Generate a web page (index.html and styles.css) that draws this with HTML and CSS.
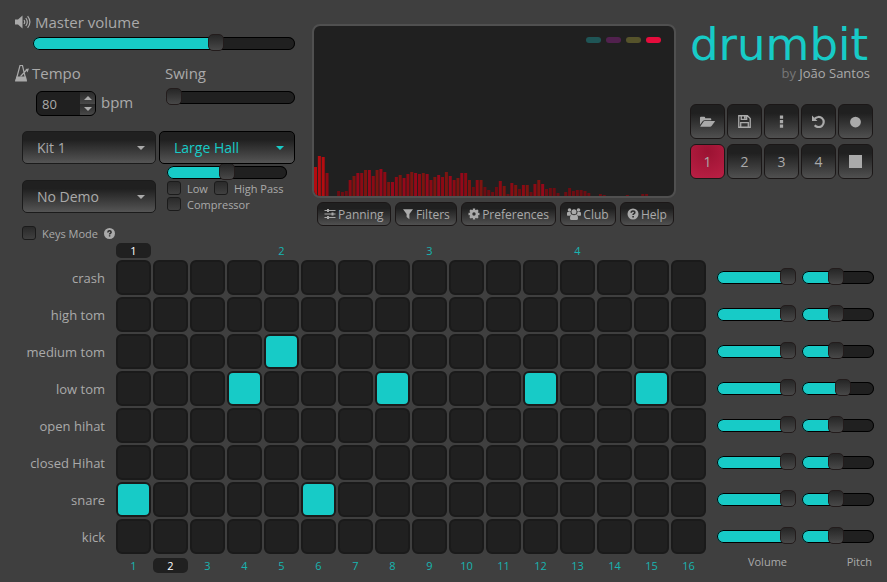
FILE: index.html
```
<!DOCTYPE html>
<html lang="en">
<head>
    <meta charset="UTF-8">
    <meta name="viewport" content="width=device-width, initial-scale=1.0">
    <title>drumbit</title>
    <link rel="stylesheet" href="styles.css">
</head>
<body>
    <header class="top">
        <section class="controls">
            <label class="title" for="master">
                <svg class="icon" viewBox="0 0 16 16"><path d="M0 5.500h3L7.500 1.500v13L3 10.500H0z"/><path class="line" d="M9 6q1.500 2 0 4M10.800 4q3 4 0 8M12.600 2.200q4.600 5.800 0 11.600"/></svg>
                Master volume
            </label>
            <input class="range master" id="master" type="range" value="71" style="--value: 71%">
            <div class="columns">
                <div class="column left">
                    <label class="title" for="tempo">
                        <svg class="icon metronome" viewBox="0 0 14 17"><path class="line" d="M5 1h2.500l3.500 15H1zM5.500 12L12 5"/><path d="M1.500 12h9.500l1 5H0zM10.500 4.500l3.500-.5-1.500 4z"/></svg>
                        Tempo
                    </label>
                    <div class="tempo">
                        <div class="spinner">
                            <input id="tempo" type="number" value="80">
                            <div class="arrows">
                                <button class="up" aria-label="Faster"></button>
                                <button class="down" aria-label="Slower"></button>
                            </div>
                        </div>
                        <span class="unit">bpm</span>
                    </div>
                    <div class="select kit">
                        <select aria-label="Kit"><option>Kit 1</option></select>
                    </div>
                    <div class="select demo">
                        <select aria-label="Demo"><option>No Demo</option></select>
                    </div>
                    <label class="check keys">
                        <input type="checkbox"> Keys Mode
                        <svg class="help" viewBox="0 0 12 12"><circle cx="6" cy="6" r="6"/><path class="cut" d="M4.200 4.800q0-1.800 1.800-1.800t1.800 1.500q0 .9-1 1.400-.7.400-.7 1.200M6.100 8v1.400"/></svg>
                    </label>
                </div>
                <div class="column right">
                    <label class="title" for="swing">Swing</label>
                    <input class="range swing" id="swing" type="range" value="0" style="--value: 0%">
                    <div class="select reverb">
                        <select aria-label="Reverb"><option>Large Hall</option></select>
                    </div>
                    <input class="range wet" type="range" value="50" style="--value: 50%" aria-label="Reverb amount">
                    <div class="checks">
                        <label class="check"><input type="checkbox"> Low</label>
                        <label class="check"><input type="checkbox"> High Pass</label>
                        <label class="check"><input type="checkbox"> Compressor</label>
                    </div>
                </div>
            </div>
        </section>

        <section class="center">
            <div class="scope">
                <div class="leds">
                    <span class="led teal"></span>
                    <span class="led purple"></span>
                    <span class="led olive"></span>
                    <span class="led red"></span>
                </div>
                <svg id="spectrum" viewBox="0 0 360 42" preserveAspectRatio="none"></svg>
            </div>
            <nav class="menu">
                <button class="button">
                    <svg viewBox="0 0 12 12"><path class="line" d="M.5 2.500h11M.5 6h11M.5 9.500h11"/><path d="M3 1h2v3H3zM7.500 4.500h2v3h-2zM3 8h2v3H3z"/></svg>
                    Panning
                </button>
                <button class="button">
                    <svg viewBox="0 0 12 12"><path d="M1 1.200h10L7.400 6v5.200L4.600 9V6z"/></svg>
                    Filters
                </button>
                <button class="button">
                    <svg viewBox="0 0 12 12"><circle class="gear" cx="6" cy="6" r="3"/><path class="teeth" d="M6 .5v2M6 9.500v2M.5 6h2M9.500 6h2M2.100 2.100l1.500 1.500M8.400 8.400l1.500 1.500M2.100 9.900l1.500-1.500M8.400 3.600l1.500-1.500"/></svg>
                    Preferences
                </button>
                <button class="button">
                    <svg class="wide" viewBox="0 0 14 12"><circle cx="2.500" cy="2" r="1.800"/><circle cx="11.500" cy="2" r="1.800"/><circle cx="7" cy="3.700" r="2.500"/><path d="M0 7.200V5q0-1 1-1h2.500q.2 2 1 2.500-1 .2-1.700 1.200H.5zM14 7.200V5q0-1-1-1h-2.500q-.2 2-1 2.500 1 .2 1.700 1.200h2.300zM3 10.500q0-3.800 2-4 2 1.300 4 0 2 .2 2 4 0 1.500-1.500 1.500h-5Q3 12 3 10.500z"/></svg>
                    Club
                </button>
                <button class="button">
                    <svg viewBox="0 0 12 12"><circle cx="6" cy="6" r="5.500"/><path class="cut" d="M4.200 4.800q0-1.800 1.800-1.800t1.800 1.500q0 .9-1 1.400-.7.400-.7 1.200M6.100 8v1.400"/></svg>
                    Help
                </button>
            </nav>
        </section>

        <section class="side">
            <h1>drumbit</h1>
            <p class="author">by <a href="#">João Santos</a></p>
            <div class="pads">
                <button class="button" aria-label="Open"><svg viewBox="0 0 16 12"><path d="M0 9V1.500Q0 .5 1 .5h3.500q1 0 1 1V2H11q1 0 1 1v1H5Q3.800 4 3 5z"/><path d="M5 5h10.500q.7 0 .2.700L12.500 10q-.7 1-1.700 1H.8q-.7 0-.2-.7L3.500 6Q4 5 5 5z"/></svg></button>
                <button class="button" aria-label="Save"><svg class="small" viewBox="0 0 12 12"><path class="line" d="M.7.700h8l2.600 2.600v8H.7zM3 .7v3.300h5V.7M2.500 11V7h7v4"/><path d="M5.500 1h1.700v2.500H5.500z"/></svg></button>
                <button class="button" aria-label="More"><svg class="small" viewBox="0 0 12 12"><path d="M4.500.500h3v3h-3zM4.500 4.600h3v3h-3zM4.500 8.700h3v3h-3z"/></svg></button>
                <button class="button" aria-label="Undo"><svg class="small" viewBox="0 0 12 12"><path class="arc" d="M2.500 3.500A4.700 4.700 0 1 1 2.500 9.500"/><path d="M0 .5v5h5z"/></svg></button>
                <button class="button" aria-label="Record"><svg class="small" viewBox="0 0 12 12"><circle cx="6" cy="6.500" r="5"/></svg></button>
                <button class="button active">1</button>
                <button class="button">2</button>
                <button class="button">3</button>
                <button class="button">4</button>
                <button class="button" aria-label="Stop"><svg class="small" viewBox="0 0 12 12"><path d="M0 0h12v12H0z"/></svg></button>
            </div>
        </section>
    </header>

    <main class="sequencer" id="sequencer"></main>

    <script src="script.js"></script>
</body>
</html>
```
FILE: styles.css
```
* {
    box-sizing: border-box;
}

body {
    margin: 0;
    background: #3f3f3f;
    color: #aaa;
    font-family: "Open Sans", "Noto Sans", sans-serif;
    font-size: 13px;
}

button,
input,
select {
    margin: 0;
    font-family: inherit;
    color: inherit;
}

svg {
    display: block;
    flex-shrink: 0;
    fill: #aaa;
}

svg .line,
svg .arc,
svg .cut,
svg .teeth {
    fill: none;
    stroke: #aaa;
    stroke-width: 1.2;
}

svg .arc {
    stroke-width: 2;
}

svg .cut {
    stroke: #2c2c2c;
    stroke-width: 1.6;
}

svg .gear {
    fill: none;
    stroke: #aaa;
    stroke-width: 2.6;
}

svg .teeth {
    stroke-width: 2.4;
}

.top {
    display: grid;
    grid-template-columns: 283px 1fr 183px;
    column-gap: 14px;
    padding: 0 14px 0 15px;
}

/* left controls */

.controls {
    padding: 13px 3px 0 0;
}

.title {
    display: flex;
    align-items: center;
    gap: 4px;
    height: 18px;
    font-size: 15px;
    line-height: 18px;
}

.icon {
    width: 16px;
    height: 16px;
}

.metronome {
    width: 14px;
    height: 18px;
}

.left .title {
    gap: 3px;
}

.range {
    -webkit-appearance: none;
    appearance: none;
    display: block;
    width: 100%;
    height: 17px;
    background: none;
}

.range::-webkit-slider-runnable-track {
    height: 13px;
    border-radius: 7px;
    background: linear-gradient(to right, #17cbc7 var(--value), #202020 var(--value));
    box-shadow: inset 0 0 0 1px #000;
}

.range::-webkit-slider-thumb {
    -webkit-appearance: none;
    appearance: none;
    width: 16px;
    height: 17px;
    margin-top: -3px;
    border: 1px solid #231c1c;
    border-radius: 5px;
    background: linear-gradient(#262626, #484848);
}

.master {
    width: calc(100% - 18px);
    margin: 4px 0 0 18px;
}

.columns {
    display: grid;
    grid-template-columns: 141px minmax(0, 1fr);
    column-gap: 3px;
    margin-top: 12px;
}

.column {
    display: flex;
    flex-direction: column;
}

.right .title {
    padding-left: 6px;
}

.tempo {
    display: flex;
    align-items: center;
    gap: 5px;
    height: 25px;
    margin: 9px 0 15px 21px;
    font-size: 15px;
}

.unit {
    padding-bottom: 3px;
}

.spinner {
    display: flex;
    width: 60px;
    height: 25px;
    border: 1px solid #000;
    border-radius: 6px;
    background: #202020;
    overflow: hidden;
}

.spinner input {
    flex: 1;
    min-width: 0;
    padding: 0 0 0 5px;
    border: 0;
    background: none;
    font-size: 13px;
    -moz-appearance: textfield;
    appearance: textfield;
}

.spinner input::-webkit-inner-spin-button {
    display: none;
}

.arrows {
    display: grid;
    grid-template-rows: 1fr 1fr;
    width: 15px;
}

.arrows button {
    display: grid;
    place-items: center;
    padding: 0;
    border: 0;
    background: linear-gradient(#2a2a2a, #484848);
}

.arrows button::after {
    content: "";
    border: 4px solid transparent;
    border-top-width: 0;
    border-bottom-color: #aaa;
}

.arrows .down::after {
    border-width: 4px 4px 0;
    border-top-color: #aaa;
}

.select {
    position: relative;
    height: 33px;
}

.select select {
    -webkit-appearance: none;
    appearance: none;
    width: 100%;
    height: 100%;
    padding: 0 14px;
    border: 1px solid #1b1b1b;
    border-radius: 5px;
    background: linear-gradient(#202020 25%, #555);
    font-size: 14px;
}

.select::after {
    content: "";
    position: absolute;
    top: 15px;
    right: 11px;
    border: 4px solid transparent;
    border-top-color: #aaa;
    border-bottom-width: 0;
    pointer-events: none;
}

.kit,
.demo {
    margin-left: 7px;
}

.demo {
    margin-top: 16px;
}

.reverb {
    margin-top: 25px;
    color: #17cbc7;
}

.reverb select {
    border-color: #000;
}

.reverb::after {
    border-top-color: #17cbc7;
}

.swing {
    width: auto;
    margin: 7px 0 0 7px;
}

.wet {
    width: auto;
    margin: 0 8px;
}

.checks {
    display: flex;
    flex-wrap: wrap;
    gap: 2px 6px;
    padding-left: 8px;
}

.check {
    display: flex;
    align-items: center;
    gap: 6px;
    height: 14px;
    font-size: 11px;
    white-space: nowrap;
}

.check input {
    -webkit-appearance: none;
    appearance: none;
    width: 14px;
    height: 14px;
    border: 1px solid #1b1b1b;
    border-radius: 3px;
    background: linear-gradient(#2a2a2a, #404040);
}

.keys {
    margin: 13px 0 0 7px;
}

.help {
    width: 11px;
    height: 11px;
}

/* spectrum and menu */

.center {
    padding-top: 24px;
}

.scope {
    display: flex;
    flex-direction: column;
    justify-content: space-between;
    height: 174px;
    border: 2px solid #505050;
    border-radius: 8px;
    background: #202020;
    overflow: hidden;
}

.leds {
    display: flex;
    justify-content: flex-end;
    gap: 5px;
    padding: 11px 13px;
}

.led {
    width: 15px;
    height: 6px;
    border-radius: 3px;
}

.teal {
    background: #1f5556;
}

.purple {
    background: #51214e;
}

.olive {
    background: #56532b;
}

.red {
    background: #e60c3c;
}

#spectrum {
    width: 100%;
    height: 42px;
}

.button {
    display: flex;
    align-items: center;
    justify-content: center;
    padding: 0;
    border: 1px solid #1b1717;
    border-radius: 6px;
    background: linear-gradient(#202020 25%, #505050);
}

.menu {
    display: flex;
    justify-content: space-between;
    margin-top: 4px;
    padding: 0 2px 0 5px;
}

.menu .button {
    gap: 2px;
    height: 24px;
    padding: 0 6px;
    font-size: 12px;
}

.menu svg {
    width: 12px;
    height: 12px;
}

.menu .wide {
    width: 14px;
}

/* logo and pattern buttons */

.side {
    padding-top: 23px;
}

h1 {
    margin: 0;
    color: #17cbc7;
    font-family: "DejaVu Sans", sans-serif;
    font-size: 45px;
    font-weight: 400;
    line-height: 44px;
}

.author {
    margin: 0;
    padding-right: 3px;
    color: #777;
    font-size: 13px;
    line-height: 12px;
    text-align: right;
}

.author a {
    color: #aaa;
    text-decoration: none;
}

.pads {
    display: grid;
    grid-template-columns: repeat(5, 1fr);
    gap: 5px 2px;
    margin-top: 25px;
}

.pads .button {
    height: 35px;
    font-size: 14px;
}

.pads svg {
    width: 15px;
    height: 12px;
}

.pads .small {
    width: 13px;
    height: 13px;
}

.pads .active {
    background: radial-gradient(circle at 50% 20%, #9b1232, #bb2045);
}

/* sequencer */

.sequencer {
    display: flex;
    flex-direction: column;
    gap: 2px;
    padding: 3px 13px 0 0;
}

.row {
    display: grid;
    grid-template-columns: 105px 1fr 79px 72px;
    column-gap: 6px;
    align-items: center;
}

.name {
    text-align: right;
    font-size: 13px;
}

.steps {
    display: grid;
    grid-template-columns: repeat(16, 1fr);
    gap: 2px;
    padding: 0 5px;
}

.step {
    -webkit-appearance: none;
    appearance: none;
    width: 100%;
    height: 35px;
    border: 2px solid #1a1a1a;
    border-radius: 6px;
    background: #202020;
}

.step:checked {
    background: #17cbc7;
}

.number {
    height: 15px;
    border-radius: 5px;
    color: #17b5b1;
    font-size: 11px;
    line-height: 15px;
    text-align: center;
}

.number.current {
    background: #202020;
    color: #fff;
}

.row:last-child {
    align-items: start;
}

.row:last-child .steps {
    padding-top: 2px;
}

.caption {
    padding-right: 2px;
    font-size: 11px;
    line-height: 11px;
    text-align: right;
}

.caption.volume {
    padding-right: 9px;
}
```
FILE: script.js
```
const tracks = [
    { name: 'crash', steps: [], pitch: 46 },
    { name: 'high tom', steps: [], pitch: 46 },
    { name: 'medium tom', steps: [5], pitch: 46 },
    { name: 'low tom', steps: [4, 8, 12, 15], pitch: 59 },
    { name: 'open hihat', steps: [], pitch: 46 },
    { name: 'closed Hihat', steps: [], pitch: 46 },
    { name: 'snare', steps: [1, 6], pitch: 46 },
    { name: 'kick', steps: [], pitch: 46 },
];
const levels = [29, 40, 39, 23, 0, 0, 5, 4, 5, 16, 20, 23, 23, 26, 26, 20, 26, 27, 24, 14, 14, 19, 21, 18,
    22, 24, 23, 22, 23, 22, 16, 19, 21, 19, 24, 20, 16, 18, 23, 23, 16, 9, 16, 16, 9, 6, 4, 9, 15, 10, 2,
    13, 11, 7, 11, 11, 4, 12, 16, 12, 7, 8, 8, 3, 0, 4, 8, 5, 6, 6, 5, 3, 0, 0, 2, 1, 0, 0, 0, 0, 0, 1,
    0, 0, 0, 2, 2];
const sequencer = document.getElementById('sequencer');

function addRow(left, cells, right) {
    const row = document.createElement('div');
    row.className = 'row';
    row.innerHTML = `<span class="name">${left}</span><div class="steps">${cells.join('')}</div>${right}`;
    sequencer.appendChild(row);
}

function numbers(current, label) {
    const cells = [];
    for (let i = 1; i <= 16; i++) {
        cells.push(`<span class="number${i === current ? ' current' : ''}">${label(i)}</span>`);
    }
    return cells;
}

function range(type, track, value) {
    return `<input class="range" type="range" value="${value}" style="--value: ${value}%" aria-label="${track} ${type}">`;
}

addRow('', numbers(1, i => i % 4 === 1 ? (i + 3) / 4 : ''), '');

tracks.forEach(track => {
    const cells = [];
    for (let i = 1; i <= 16; i++) {
        const checked = track.steps.includes(i) ? ' checked' : '';
        cells.push(`<input class="step" type="checkbox" aria-label="${track.name} ${i}"${checked}>`);
    }
    addRow(track.name, cells, range('volume', track.name, 100) + range('pitch', track.name, track.pitch));
});

addRow('', numbers(2, i => i), '<span class="caption volume">Volume</span><span class="caption">Pitch</span>');

// spectrum bars
const colors = ['#8c0a14', '#7d1410', '#95081a'];
document.getElementById('spectrum').innerHTML = levels.map((level, i) => {
    const color = level > 28 ? '#b50c10' : level < 10 ? '#6d0c12' : colors[i % 3];
    return `<rect x="${i * 3.85}" y="${42 - level}" width="3" height="${level}" fill="${color}"/>`;
}).join('');

document.querySelectorAll('.range').forEach(input => {
    input.addEventListener('input', () => input.style.setProperty('--value', input.value + '%'));
});
```
